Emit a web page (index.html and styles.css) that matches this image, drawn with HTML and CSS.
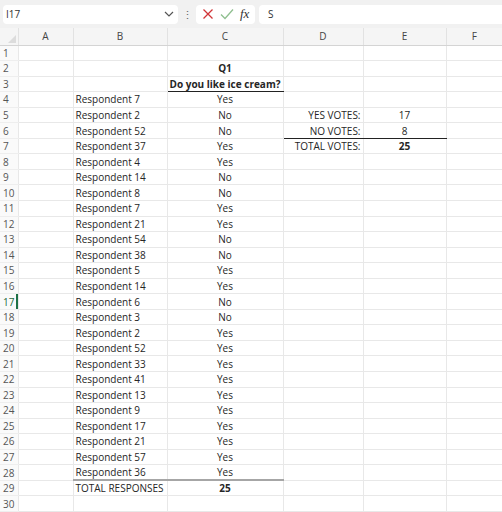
FILE: index.html
```html
<!DOCTYPE html>
<html>
<head>
<meta charset="utf-8">
<link rel="stylesheet" href="styles.css">
</head>
<body>
<div class="topbar">
  <div class="namebox"><span>I17</span>
    <svg class="chev" width="10" height="6" viewBox="0 0 10 6"><path d="M1 1 L5 5 L9 1" fill="none" stroke="#555" stroke-width="1.2"/></svg>
  </div>
  <div class="dots">⋮</div>
  <div class="fxbox">
    <svg width="12" height="12" viewBox="0 0 12 12"><path d="M1.5 1.5 L10.5 10.5 M10.5 1.5 L1.5 10.5" stroke="#d13438" stroke-width="1.3" fill="none"/></svg>
    <svg width="14" height="12" viewBox="0 0 14 12"><path d="M1 6.5 L5 10.5 L13 1.5" stroke="#8fbf8f" stroke-width="1.3" fill="none"/></svg>
    <span class="fx">fx</span>
  </div>
  <div class="formula">S</div>
</div>
<table class="sheet">
  <colgroup><col class="c0"><col class="ca"><col class="cb"><col class="cc"><col class="cd"><col class="ce"><col class="cf"></colgroup>
  <thead>
    <tr><th class="corner"><span class="tri"></span></th><th>A</th><th>B</th><th>C</th><th>D</th><th>E</th><th>F</th></tr>
  </thead>
  <tbody>
    <tr><th>1</th><td></td><td></td><td></td><td></td><td></td><td></td></tr>
    <tr><th>2</th><td></td><td></td><td class="mid bold">Q1</td><td></td><td></td><td></td></tr>
    <tr><th>3</th><td></td><td></td><td class="mid bold ul">Do you like ice cream?</td><td></td><td></td><td></td></tr>
    <tr><th>4</th><td></td><td class="l">Respondent 7</td><td class="mid">Yes</td><td></td><td></td><td></td></tr>
    <tr><th>5</th><td></td><td class="l">Respondent 2</td><td class="mid">No</td><td class="r">YES VOTES:</td><td class="mid">17</td><td></td></tr>
    <tr><th>6</th><td></td><td class="l">Respondent 52</td><td class="mid">No</td><td class="r ul">NO VOTES:</td><td class="mid ul">8</td><td></td></tr>
    <tr><th>7</th><td></td><td class="l">Respondent 37</td><td class="mid">Yes</td><td class="r">TOTAL VOTES:</td><td class="mid bold">25</td><td></td></tr>
    <tr><th>8</th><td></td><td class="l">Respondent 4</td><td class="mid">Yes</td><td></td><td></td><td></td></tr>
    <tr><th>9</th><td></td><td class="l">Respondent 14</td><td class="mid">No</td><td></td><td></td><td></td></tr>
    <tr><th>10</th><td></td><td class="l">Respondent 8</td><td class="mid">No</td><td></td><td></td><td></td></tr>
    <tr><th>11</th><td></td><td class="l">Respondent 7</td><td class="mid">Yes</td><td></td><td></td><td></td></tr>
    <tr><th>12</th><td></td><td class="l">Respondent 21</td><td class="mid">Yes</td><td></td><td></td><td></td></tr>
    <tr><th>13</th><td></td><td class="l">Respondent 54</td><td class="mid">No</td><td></td><td></td><td></td></tr>
    <tr><th>14</th><td></td><td class="l">Respondent 38</td><td class="mid">No</td><td></td><td></td><td></td></tr>
    <tr><th>15</th><td></td><td class="l">Respondent 5</td><td class="mid">Yes</td><td></td><td></td><td></td></tr>
    <tr><th>16</th><td></td><td class="l">Respondent 14</td><td class="mid">Yes</td><td></td><td></td><td></td></tr>
    <tr><th class="active">17</th><td></td><td class="l">Respondent 6</td><td class="mid">No</td><td></td><td></td><td></td></tr>
    <tr><th>18</th><td></td><td class="l">Respondent 3</td><td class="mid">No</td><td></td><td></td><td></td></tr>
    <tr><th>19</th><td></td><td class="l">Respondent 2</td><td class="mid">Yes</td><td></td><td></td><td></td></tr>
    <tr><th>20</th><td></td><td class="l">Respondent 52</td><td class="mid">Yes</td><td></td><td></td><td></td></tr>
    <tr><th>21</th><td></td><td class="l">Respondent 33</td><td class="mid">Yes</td><td></td><td></td><td></td></tr>
    <tr><th>22</th><td></td><td class="l">Respondent 41</td><td class="mid">Yes</td><td></td><td></td><td></td></tr>
    <tr><th>23</th><td></td><td class="l">Respondent 13</td><td class="mid">Yes</td><td></td><td></td><td></td></tr>
    <tr><th>24</th><td></td><td class="l">Respondent 9</td><td class="mid">Yes</td><td></td><td></td><td></td></tr>
    <tr><th>25</th><td></td><td class="l">Respondent 17</td><td class="mid">Yes</td><td></td><td></td><td></td></tr>
    <tr><th>26</th><td></td><td class="l">Respondent 21</td><td class="mid">Yes</td><td></td><td></td><td></td></tr>
    <tr><th>27</th><td></td><td class="l">Respondent 57</td><td class="mid">Yes</td><td></td><td></td><td></td></tr>
    <tr><th>28</th><td></td><td class="l gl">Respondent 36</td><td class="mid gl">Yes</td><td></td><td></td><td></td></tr>
    <tr><th>29</th><td></td><td class="l">TOTAL RESPONSES</td><td class="mid bold">25</td><td></td><td></td><td></td></tr>
    <tr><th>30</th><td></td><td></td><td></td><td></td><td></td><td></td></tr>
  </tbody>
</table>
</body>
</html>
```
FILE: styles.css
```css
html, body {
  margin: 0;
  padding: 0;
  background: #fff;
}
body {
  width: 502px;
  height: 512px;
  overflow: hidden;
  font-family: "Open Sans", "Liberation Sans", sans-serif;
  color: #222;
}
.topbar {
  height: 28px;
  background: #f1f1f1;
  display: flex;
  align-items: center;
  padding-left: 3px;
  box-sizing: border-box;
}
.namebox {
  width: 175px;
  height: 19px;
  background: #fff;
  border-radius: 4px;
  display: flex;
  align-items: center;
  justify-content: space-between;
  padding: 0 3px 0 3px;
  box-sizing: border-box;
  font-size: 10px;
  color: #333;
}
.chev { margin-right: 1px; }
.dots {
  width: 18px;
  text-align: center;
  font-size: 11px;
  color: #666;
}
.fxbox {
  width: 59px;
  height: 19px;
  background: #fff;
  border-radius: 4px;
  display: flex;
  align-items: center;
  gap: 6px;
  padding-left: 6px;
  box-sizing: border-box;
}
.fx {
  font-family: "Liberation Serif", serif;
  font-style: italic;
  font-size: 13px;
  color: #333;
}
.formula {
  flex: 1;
  height: 19px;
  margin-left: 4px;
  background: #fff;
  border-radius: 4px 0 0 4px;
  display: flex;
  align-items: center;
  padding-left: 9px;
  font-size: 10px;
  color: #333;
}
.sheet {
  border-collapse: collapse;
  table-layout: fixed;
  width: 502px;
  font-size: 10px;
}
.c0 { width: 18px; }
.ca { width: 55px; }
.cb { width: 94px; }
.cc { width: 116px; }
.cd { width: 80px; }
.ce { width: 83px; }
.cf { width: 56px; }
thead th {
  height: 17px;
  padding: 0;
  background: #f5f5f5;
  font-weight: normal;
  color: #444;
  font-size: 10px;
  border-left: 1px solid #e2e2e2;
  border-bottom: 1px solid #d4d4d4;
  box-sizing: border-box;
}
thead th.corner {
  border-left: none;
  position: relative;
}
.tri {
  position: absolute;
  right: 2px;
  bottom: 2px;
  width: 0;
  height: 0;
  border-left: 8px solid transparent;
  border-bottom: 8px solid #dcdcdc;
}
tbody tr {
  height: 15.56px;
}
tbody th {
  padding: 0 0 0 3px;
  text-align: left;
  font-weight: normal;
  color: #555;
  font-size: 10px;
  background: #fafafa;
  border-bottom: 1px solid #eeeeee;
}
tbody th.active {
  color: #1e6b3a;
  box-shadow: inset -2px 0 0 #1e7145;
}
td {
  padding: 0 2px;
  border-left: 1px solid #e8e8e8;
  border-bottom: 1px solid #e8e8e8;
  white-space: nowrap;
  overflow: visible;
  line-height: 14px;
  color: #262626;
}
td.l { text-align: left; }
td.mid { text-align: center; }
td.r { text-align: right; }
td.bold { font-weight: bold; }
td.ul { border-bottom: 1px solid #222; }
td.gl { border-bottom: 2px solid #a6a6a6; }
```
